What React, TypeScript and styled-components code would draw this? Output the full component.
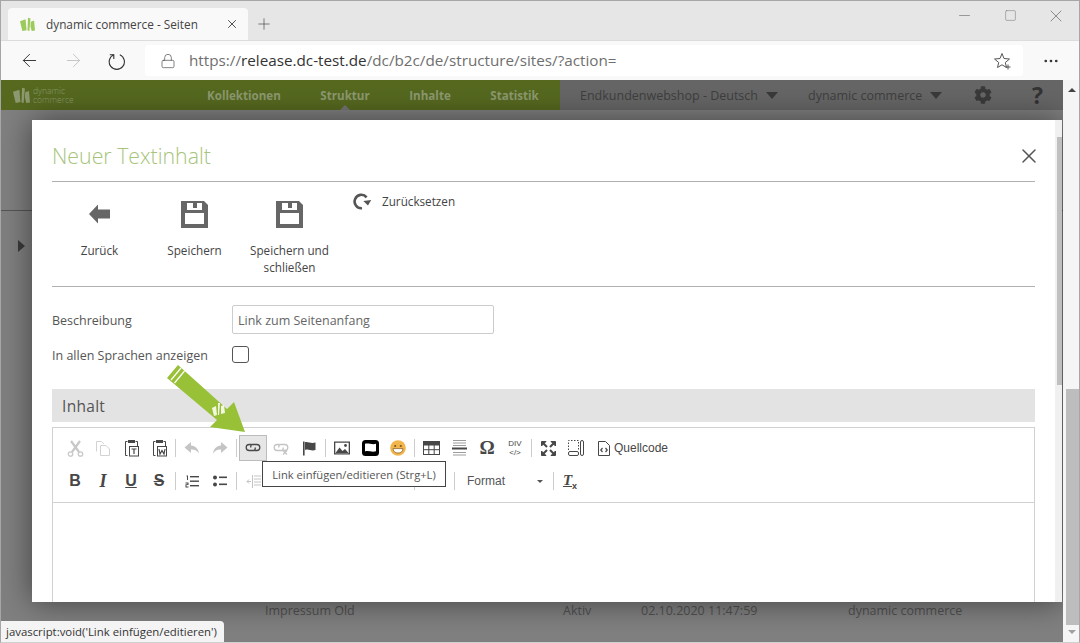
import React from 'react'
import styled, { createGlobalStyle } from 'styled-components'
import { ArrowLeft, ArrowRight, Lock, Minus, MoreHorizontal, Plus, Square, X } from 'lucide-react'
import { FaCog } from 'react-icons/fa'

const GlobalStyle = createGlobalStyle`
    html, body { margin: 0; padding: 0; }
    body { width: 1080px; height: 643px; overflow: hidden; background: #fff; }
    * { box-sizing: border-box; }
`

const Frame = styled.div`
    width: 1080px;
    height: 643px;
    display: flex;
    flex-direction: column;
    border: 1px solid #a6a6a6;
    border-bottom-color: #d0d0d0;
    font-family: 'Open Sans', sans-serif;
    position: relative;
    overflow: hidden;
`

/* browser chrome */
const TabStrip = styled.div`
    height: 40px;
    flex: none;
    background: #e6e6e6;
    display: flex;
    align-items: flex-end;
    padding-left: 7px;
    border-bottom: 1px solid #dcdcdc;
`
const Tab = styled.div`
    width: 240px;
    height: 32px;
    background: #f9f9f9;
    border-radius: 4px 4px 0 0;
    display: flex;
    align-items: center;
    padding: 0 9px 0 12px;
    color: #444;
    font-size: 11.8px;
`
const TabTitle = styled.span`
    flex: 1;
    margin-left: 11px;
    white-space: nowrap;
`
const NewTab = styled.div`
    width: 32px;
    height: 32px;
    display: flex;
    align-items: center;
    justify-content: center;
    color: #555;
`
const WindowControls = styled.div`
    margin-left: auto;
    align-self: flex-start;
    display: flex;
    color: #777;
`
const WindowControl = styled.div`
    width: 46px;
    height: 29px;
    display: flex;
    align-items: center;
    justify-content: center;
`
const ToolBar = styled.div`
    height: 39px;
    flex: none;
    background: #f9f9f9;
    display: flex;
    align-items: center;
    padding-left: 6px;
`
const NavButton = styled.div<{ $off?: boolean }>`
    width: 44px;
    height: 32px;
    display: flex;
    align-items: center;
    justify-content: center;
    color: ${({ $off }) => ($off ? '#c4c4c4' : '#333')};
`
const AddressBar = styled.div`
    width: 878px;
    height: 31px;
    margin-left: 6px;
    background: #fff;
    border-radius: 4px;
    display: flex;
    align-items: center;
    padding: 0 11px 0 15px;
    color: #555;
`
const Url = styled.div`
    flex: 1;
    margin-left: 13px;
    padding-bottom: 2px;
    font-size: 15.25px;
    white-space: nowrap;
    color: #6f6f6f;
    b { font-weight: 400; color: #333; }
`
const MoreButton = styled.div`
    width: 56px;
    display: flex;
    justify-content: center;
    color: #333;
`

/* page behind the dialog */
const Viewport = styled.div`
    flex: 1;
    min-height: 0;
    display: flex;
`
const Main = styled.div`
    flex: 1;
    min-width: 0;
    position: relative;
    overflow: hidden;
    background: #808080;
    display: flex;
    flex-direction: column;
`
const PageHeader = styled.div`
    height: 30px;
    flex: none;
    display: flex;
    background: #56691f;
`
const Logo = styled.div`
    width: 206px;
    display: flex;
    align-items: center;
    padding-left: 12px;
    color: #8d9a70;
`
const LogoText = styled.div`
    margin-left: 3px;
    font-size: 8.5px;
    line-height: 9px;
    font-weight: 300;
`
const Nav = styled.div`
    width: 353px;
    display: flex;
    align-items: center;
    gap: 39.5px;
    font-size: 11.6px;
    font-weight: 700;
    color: #8d9a70;
`
const NavItem = styled.div<{ $active?: boolean }>`
    position: relative;
    white-space: nowrap;
    ${({ $active }) => $active && `
        &::after {
            content: '';
            position: absolute;
            left: 50%;
            bottom: -7px;
            margin-left: -5px;
            border: 5px solid transparent;
            border-top: 0;
            border-bottom-color: #757575;
        }
    `}
`
const HeaderRight = styled.div`
    flex: 1;
    background: #666;
    display: flex;
    align-items: center;
    padding-left: 20px;
    color: #3f3f3f;
    font-size: 12.5px;
`
const Picker = styled.div<{ $width: number }>`
    width: ${({ $width }) => $width}px;
    display: flex;
    align-items: center;
    white-space: nowrap;
`
const Caret = styled.span`
    margin-left: 8px;
    border: 6.5px solid transparent;
    border-bottom: 0;
    border-top: 7px solid #3a3a3a;
`
const HelpMark = styled.div`
    margin-left: 40px;
    font-size: 23px;
    font-weight: 700;
    color: #333;
    line-height: 30px;
`
const PageRule = styled.div`
    margin-top: 100px;
    height: 1px;
    background: #555;
`
const TreeArrow = styled.div`
    margin: 29px 0 0 17px;
    width: 0;
    border: 6px solid transparent;
    border-right: 0;
    border-left: 7px solid #3a3a3a;
`
const TableRow = styled.div`
    margin-top: auto;
    margin-bottom: 23px;
    display: grid;
    grid-template-columns: 298px 78px 207px 1fr;
    padding-left: 264px;
    font-size: 12.5px;
    color: #505050;
    white-space: nowrap;
`

/* dialog */
const Dialog = styled.div`
    position: absolute;
    left: 31px;
    top: 40px;
    width: 1030px;
    height: 482px;
    background: #fff;
    display: flex;
    overflow: hidden;
    box-shadow: 0 0 30px rgba(0, 0, 0, 0.5);
`
const DialogBody = styled.div`
    flex: 1;
    min-width: 0;
    padding: 0 20px;
`
const DialogHead = styled.div`
    height: 62px;
    display: flex;
    align-items: center;
    justify-content: space-between;
    padding-top: 10px;
    border-bottom: 1px solid #b0b0b0;
`
const Title = styled.div`
    font-size: 21.3px;
    font-weight: 300;
    color: #a6c47c;
`
const CloseMark = styled.div`
    color: #555;
    display: flex;
    margin-right: -6px;
`
const Actions = styled.div`
    height: 105px;
    display: flex;
    border-bottom: 1px solid #b0b0b0;
    color: #444;
    font-size: 11.7px;
`
const ActionButton = styled.div`
    width: 95px;
    display: flex;
    flex-direction: column;
    align-items: center;
    text-align: center;
    line-height: 17px;
    padding-top: 18px;
`
const ActionIcon = styled.div`
    height: 28px;
    margin-bottom: 14px;
    display: flex;
    align-items: center;
`
const ResetButton = styled.div`
    display: flex;
    align-items: center;
    gap: 10px;
    height: 20px;
    margin: 9px 0 0 16px;
`
const FormRow = styled.div<{ $top: number }>`
    display: flex;
    align-items: center;
    margin-top: ${({ $top }) => $top}px;
    font-size: 12.5px;
    color: #555;
`
const FormLabel = styled.div`
    width: 180px;
    height: 17px;
    line-height: 20px;
    white-space: nowrap;
`
const TextField = styled.div`
    width: 262px;
    height: 29px;
    border: 1px solid #ccc;
    border-radius: 2px;
    padding: 2px 0 0 5px;
    display: flex;
    align-items: center;
    color: #666;
    font-size: 12.5px;
`
const CheckBox = styled.div`
    width: 17px;
    height: 17px;
    border: 1px solid #555;
    border-radius: 3px;
`
const SectionBar = styled.div`
    margin-top: 26px;
    height: 33px;
    background: #e3e3e3;
    display: flex;
    align-items: center;
    padding-left: 10px;
    font-size: 15.5px;
    color: #555;
    letter-spacing: 0.3px;
`
const Editor = styled.div`
    margin-top: 5px;
    height: 200px;
    border: 1px solid #d1d1d1;
`
const EditorTools = styled.div`
    height: 75px;
    padding: 7px 0 0 8px;
    border-bottom: 1px solid #d1d1d1;
    display: flex;
    flex-direction: column;
    gap: 7px;
`
const ToolRow = styled.div`
    display: flex;
    align-items: center;
    height: 26px;
`
const ToolButton = styled.div<{ $active?: boolean; $wide?: boolean }>`
    width: ${({ $wide }) => ($wide ? 'auto' : '28px')};
    margin-left: ${({ $wide }) => ($wide ? '8px' : '0')};
    height: 26px;
    flex: none;
    display: flex;
    align-items: center;
    justify-content: center;
    gap: 4px;
    color: #474747;
    background: ${({ $active }) => ($active ? '#e6e6e6' : 'transparent')};
    box-shadow: ${({ $active }) => ($active ? 'inset 0 0 0 1px #bcbcbc' : 'none')};
`
const Separator = styled.span<{ $before?: number }>`
    width: 5px;
    height: 18px;
    flex: none;
    margin-left: ${({ $before }) => $before ?? 0}px;
    background: linear-gradient(#ccc, #ccc) center / 1px 100% no-repeat;
`
const ToolText = styled.span`
    font-family: 'Liberation Sans', sans-serif;
    font-size: 12px;
    color: #474747;
`
const StyleLetter = styled.span<{ $underline?: boolean; $strike?: boolean; $italic?: boolean }>`
    font-family: ${({ $italic }) => ($italic ? "'Liberation Serif', serif" : "'Liberation Sans', sans-serif")};
    font-size: ${({ $italic }) => ($italic ? '18px' : '16px')};
    font-weight: 700;
    font-style: ${({ $italic }) => ($italic ? 'italic' : 'normal')};
    text-decoration: ${({ $underline, $strike }) => ($underline ? 'underline' : $strike ? 'line-through' : 'none')};
    color: #474747;
`
const Omega = styled.span`
    font-family: 'Liberation Serif', serif;
    font-size: 19px;
    font-weight: 700;
    color: #474747;
`
const DivMark = styled.span`
    display: flex;
    flex-direction: column;
    align-items: center;
    gap: 1px;
    font-family: 'Liberation Sans', sans-serif;
    font-size: 8px;
    line-height: 8px;
    color: #474747;
`
const FormatCombo = styled.div`
    width: 94px;
    height: 26px;
    flex: none;
    display: flex;
    align-items: center;
    justify-content: space-between;
    padding: 0 8px 0 10px;
    font-family: 'Liberation Sans', sans-serif;
    font-size: 12px;
    color: #555;
`
const ComboArrow = styled.span`
    border: 3px solid transparent;
    border-bottom: 0;
    border-top: 3px solid #555;
`
const ClearFormat = styled.span`
    font-family: 'Liberation Serif', serif;
    font-size: 15px;
    font-weight: 700;
    font-style: italic;
    text-decoration: underline;
    color: #474747;
    sub { font-family: 'Liberation Sans', sans-serif; font-size: 9px; font-style: normal; }
`
const DialogScroll = styled.div`
    width: 7px;
    flex: none;
    background: #f0f0f0;
    padding: 17px 0 0 2px;
    position: relative;
    &::before {
        content: '';
        display: block;
        height: 248px;
        background: #c0c0c0;
    }
`

const Tooltip = styled.div`
    position: absolute;
    left: 261px;
    top: 381px;
    width: 184px;
    height: 26px;
    background: #fff;
    border: 1px solid #444;
    display: flex;
    align-items: center;
    justify-content: center;
    font-size: 11.2px;
    color: #555;
    white-space: nowrap;
`
const Pointer = styled.svg`
    position: absolute;
    left: 160px;
    top: 284px;
`
const StatusBubble = styled.div`
    position: absolute;
    left: 0;
    bottom: 0;
    width: 223px;
    height: 21px;
    background: #f4f4f4;
    border-radius: 0 4px 0 0;
    padding-left: 5px;
    display: flex;
    align-items: center;
    font-size: 11.4px;
    color: #333;
    white-space: nowrap;
`

/* page scrollbar */
const PageScroll = styled.div`
    width: 16px;
    flex: none;
    background: #f5f5f5;
    display: flex;
    flex-direction: column;
    align-items: center;
    padding: 8px 0 0 2px;
    position: relative;
`
const ScrollUp = styled.span`
    border: 4px solid transparent;
    border-top: 0;
    border-bottom: 4px solid #444;
`
const ScrollThumb = styled.div`
    width: 13px;
    height: 236px;
    margin-top: 297px;
    background: #bdbdbd;
`
const ScrollDown = styled.span`
    margin-top: 5px;
    border: 4px solid transparent;
    border-bottom: 0;
    border-top: 4px solid #a0a0a0;
`

function BrandMark({ size, tone }: { size: number; tone: string }) {
    return (
        <svg width={size} height={size} viewBox="0 0 16 16" fill={tone}>
            <path d="M0 4.5 6 2.5 7 14 2.5 15Z" />
            <path d="M8.5 0.8 11.2 1.5 10 15 8 14.5Z" />
            <path d="M11.5 5 15 3.8 16 14.5 12.5 15 11.2 10Z" />
        </svg>
    )
}

function ReloadIcon() {
    return (
        <svg width="18" height="18" viewBox="0 0 18 18" fill="none" stroke="#333" strokeWidth="1.1">
            <path d="M11.8 2.8A7.6 7.6 0 1 1 5.8 2.8" />
            <path d="M1.8 2.8H5.8V7" />
        </svg>
    )
}

function ResetIcon() {
    return (
        <svg width="19" height="17" viewBox="0 0 19 17" fill="none">
            <path d="M9 15.2A6.7 6.7 0 1 1 13.6 4.4" stroke="#555" strokeWidth="2.6" />
            <path d="M10.5 7.5H18.5L14.5 12.5Z" fill="#555" transform="rotate(-8 14 9)" />
        </svg>
    )
}

function SaveIcon() {
    return (
        <svg width="27" height="27" viewBox="0 0 27 27">
            <path
                fill="#666"
                fillRule="evenodd"
                d="M0 0H23L27 4V27H0ZM6 2V9H21V2H16V7H12V2ZM4 12V23H23V12Z"
            />
        </svg>
    )
}

function Cut() {
    return (
        <svg width="17" height="17" viewBox="0 0 17 17" fill="none" stroke="#c8c8c8">
            <path d="M4 1 12 12M13 1 5 12" strokeWidth="2.2" />
            <circle cx="3.5" cy="14" r="2.2" strokeWidth="1.3" />
            <circle cx="13.5" cy="14" r="2.2" strokeWidth="1.3" />
        </svg>
    )
}

function Copy() {
    return (
        <svg width="16" height="17" viewBox="0 0 16 17" fill="none" stroke="#d2d2d2">
            <path d="M1.5 11.5V1.5H6.5L9 4" />
            <path d="M5.5 15.5V5.5H11L14.5 9V15.5Z" fill="#fff" />
        </svg>
    )
}

function PasteIcon({ word }: { word?: boolean }) {
    return (
        <svg width="15" height="18" viewBox="0 0 15 18" fill="none" stroke="#474747">
            <path d="M3.5 2.5H1.5V16.5H3.5M11.5 2.5H13.5V8" />
            <rect x="4" y="1" width="7" height="3" fill="#474747" stroke="none" />
            <rect x="5.5" y="7.5" width="9" height="9.5" fill="#fff" />
            <path d={word ? 'M7 10 8 15 10 11.5 12 15 13 10' : 'M7.5 10H12.5M10 10V15'} strokeWidth="1.2" />
        </svg>
    )
}

function Curve({ flip }: { flip?: boolean }) {
    return (
        <svg width="16" height="14" viewBox="0 0 16 14" fill="#c4c4c4" transform={flip ? 'scale(-1 1)' : undefined}>
            <path d="M7 1 0.5 6.5 7 12V8.5C10.5 8.2 13 9.5 15 12.5 14.5 8 11.5 4.8 7 4.5Z" />
        </svg>
    )
}

function LinkIcon({ off }: { off?: boolean }) {
    const tone = off ? '#c4c4c4' : '#474747'
    return (
        <svg width="16" height="14" viewBox="0 0 16 14" fill="none" stroke={tone} strokeWidth="1.3">
            <path d="M6.5 3.5H4.2A3 3 0 0 0 4.2 9.5H9A2.4 2.4 0 0 0 10 6.5" />
            <path d="M9.5 9.5H11.8A3 3 0 0 0 11.8 3.5H7A2.4 2.4 0 0 0 6 6.5" />
            {off && <path d="M10 9.5 14 13.5M14 9.5 10 13.5" />}
        </svg>
    )
}

function FlagIcon() {
    return (
        <svg width="15" height="15" viewBox="0 0 15 15" fill="#474747">
            <rect x="1" y="0.5" width="1.6" height="14" />
            <path d="M3 1.2C6 0 8.5 3 13.5 1.5V9C9 10.5 6.5 7.5 3 9Z" />
        </svg>
    )
}

function ImageIcon() {
    return (
        <svg width="16" height="14" viewBox="0 0 16 14" fill="#474747">
            <path fillRule="evenodd" d="M0 0.5H16V13.5H0ZM1.3 1.8V12.2H14.7V1.8Z" />
            <path d="M1.5 12 5.5 6.5 8.5 10 11 8 14.5 12Z" />
            <circle cx="11.5" cy="4.5" r="1.4" />
        </svg>
    )
}

function MediaIcon() {
    return (
        <svg width="17" height="16" viewBox="0 0 17 16">
            <rect width="17" height="16" rx="3.5" fill="#000" />
            <path d="M3 3.8C6 2.6 10 5 14 3.8V11.2C10 12.6 6 10.2 3 11.5Z" fill="#fff" />
        </svg>
    )
}

function SmileyIcon() {
    return (
        <svg width="16" height="16" viewBox="0 0 16 16">
            <circle cx="8" cy="8" r="7.8" fill="#f2b54b" />
            <circle cx="5.2" cy="6" r="1.1" fill="#7a5620" />
            <circle cx="10.8" cy="6" r="1.1" fill="#7a5620" />
            <path d="M3 8.6H13C12.6 12 10.5 13 8 13S3.4 12 3 8.6Z" fill="#fff" stroke="#7a5620" strokeWidth="0.7" />
        </svg>
    )
}

function TableIcon() {
    return (
        <svg width="17" height="14" viewBox="0 0 17 14" fill="none" stroke="#474747">
            <rect x="0.5" y="0.5" width="16" height="13" />
            <rect x="0.5" y="0.5" width="16" height="3.5" fill="#474747" />
            <path d="M0.5 8.7H16.5M5.8 4V13.5M11.2 4V13.5" />
        </svg>
    )
}

function RuleIcon() {
    return (
        <svg width="15" height="16" viewBox="0 0 15 16" stroke="#9c9c9c">
            <path d="M1 0.5H14M1 3H14M1 5.5H14M1 12.5H14M1 15H14" />
            <path d="M0 8.5H15" stroke="#474747" strokeWidth="2" />
        </svg>
    )
}

function MaximizeIcon() {
    return (
        <svg width="15" height="15" viewBox="0 0 15 15" fill="#474747" stroke="#474747">
            <path d="M0.5 5V0.5H5ZM10 0.5H14.5V5ZM0.5 10V14.5H5ZM14.5 10V14.5H10Z" />
            <path d="M2 2 6 6M13 2 9 6M2 13 6 9M13 13 9 9" strokeWidth="2" />
        </svg>
    )
}

function BlocksIcon() {
    return (
        <svg width="16" height="16" viewBox="0 0 16 16" fill="none" stroke="#474747">
            <path d="M0.5 10V0.5H10.5V10" strokeDasharray="1.5 1.5" />
            <rect x="0.5" y="11.5" width="10" height="4" rx="1.5" />
            <rect x="12.5" y="0.5" width="3" height="15" rx="1.5" />
        </svg>
    )
}

function SourceIcon() {
    return (
        <svg width="12" height="15" viewBox="0 0 12 15" fill="none" stroke="#474747">
            <path d="M0.5 0.5H7.5L11.5 4.5V14.5H0.5Z" />
            <path d="M4.5 7 2.8 9 4.5 11M7.5 7 9.2 9 7.5 11" strokeWidth="1.2" />
        </svg>
    )
}

function NumberedList() {
    return (
        <svg width="14" height="13" viewBox="0 0 14 13" fill="#474747">
            <rect x="5" y="1" width="9" height="1.4" />
            <rect x="5" y="5.5" width="9" height="1.4" />
            <rect x="5" y="10" width="9" height="1.4" />
            <path d="M1.5 0.5H3V5H2V1.5H1.5ZM0.5 7.5H3.5V10H1.5V11.5H3.5V12.5H0.5V9.2H2.5V8.5H0.5Z" />
        </svg>
    )
}

function BulletList() {
    return (
        <svg width="14" height="12" viewBox="0 0 14 12" fill="#474747">
            <circle cx="2" cy="2.5" r="2" />
            <circle cx="2" cy="9.5" r="2" />
            <rect x="6" y="1.5" width="8" height="1.6" />
            <rect x="6" y="8.5" width="8" height="1.6" />
        </svg>
    )
}

function OutdentIcon() {
    return (
        <svg width="15" height="13" viewBox="0 0 15 13" stroke="#c4c4c4" fill="none">
            <path d="M6.5 0V13M8 1H15M8 4H15M8 7H15M8 10H15M1 6.5H5M3 4.5 1 6.5 3 8.5" />
        </svg>
    )
}

const FIRST_ROW_PASTE = [<Cut key="cut" />, <Copy key="copy" />, <PasteIcon key="text" />, <PasteIcon key="word" word />]

export default function App() {
    return (
        <>
            <GlobalStyle />
            <Frame>
                <TabStrip>
                    <Tab>
                        <BrandMark size={15} tone="#9ccb5c" />
                        <TabTitle>dynamic commerce - Seiten</TabTitle>
                        <X size={14} strokeWidth={1.6} color="#444" />
                    </Tab>
                    <NewTab>
                        <Plus size={18} strokeWidth={1} />
                    </NewTab>
                    <WindowControls>
                        <WindowControl><Minus size={17} strokeWidth={1} /></WindowControl>
                        <WindowControl><Square size={13} strokeWidth={1} /></WindowControl>
                        <WindowControl><X size={20} strokeWidth={1} /></WindowControl>
                    </WindowControls>
                </TabStrip>
                <ToolBar>
                    <NavButton><ArrowLeft size={21} strokeWidth={1.1} /></NavButton>
                    <NavButton $off><ArrowRight size={21} strokeWidth={1.1} /></NavButton>
                    <NavButton><ReloadIcon /></NavButton>
                    <AddressBar>
                        <Lock size={16} strokeWidth={1.1} />
                        <Url>
                            https://<b>release.dc-test.de</b>/dc/b2c/de/structure/sites/?action=
                        </Url>
                        <svg width="18" height="18" viewBox="0 0 18 18" fill="none" stroke="#555">
                            <path d="M8 1.5 10 6.5 15.5 7 11.3 10.5 12.5 15.5 8 12.8 3.5 15.5 4.7 10.5 0.5 7 6 6.5Z" />
                            <path d="M14 12.5V17.5M11.5 15H16.5" />
                        </svg>
                    </AddressBar>
                    <MoreButton><MoreHorizontal size={18} strokeWidth={1.6} /></MoreButton>
                </ToolBar>
                <Viewport>
                    <Main>
                        <PageHeader>
                            <Logo>
                                <BrandMark size={17} tone="#8d9a70" />
                                <LogoText>dynamic<br />commerce</LogoText>
                            </Logo>
                            <Nav>
                                <NavItem>Kollektionen</NavItem>
                                <NavItem $active>Struktur</NavItem>
                                <NavItem>Inhalte</NavItem>
                                <NavItem>Statistik</NavItem>
                            </Nav>
                            <HeaderRight>
                                <Picker $width={228}>Endkundenwebshop - Deutsch<Caret /></Picker>
                                <Picker $width={166}>dynamic commerce<Caret /></Picker>
                                <FaCog size={18} color="#3a3a3a" />
                                <HelpMark>?</HelpMark>
                            </HeaderRight>
                        </PageHeader>
                        <PageRule />
                        <TreeArrow />
                        <TableRow>
                            <span>Impressum Old</span>
                            <span>Aktiv</span>
                            <span>02.10.2020 11:47:59</span>
                            <span>dynamic commerce</span>
                        </TableRow>

                        <Dialog>
                            <DialogBody>
                                <DialogHead>
                                    <Title>Neuer Textinhalt</Title>
                                    <CloseMark><X size={24} strokeWidth={1.5} /></CloseMark>
                                </DialogHead>
                                <Actions>
                                    <ActionButton>
                                        <ActionIcon>
                                            <svg width="21" height="20" viewBox="0 0 21 20" fill="#666">
                                                <path d="M0 10 9 0.5V5.5H21V14.5H9V19.5Z" />
                                            </svg>
                                        </ActionIcon>
                                        Zurück
                                    </ActionButton>
                                    <ActionButton>
                                        <ActionIcon><SaveIcon /></ActionIcon>
                                        Speichern
                                    </ActionButton>
                                    <ActionButton>
                                        <ActionIcon><SaveIcon /></ActionIcon>
                                        Speichern und schließen
                                    </ActionButton>
                                    <ResetButton>
                                        <ResetIcon />
                                        Zurücksetzen
                                    </ResetButton>
                                </Actions>
                                <FormRow $top={18}>
                                    <FormLabel>Beschreibung</FormLabel>
                                    <TextField>Link zum Seitenanfang</TextField>
                                </FormRow>
                                <FormRow $top={12}>
                                    <FormLabel>In allen Sprachen anzeigen</FormLabel>
                                    <CheckBox />
                                </FormRow>
                                <SectionBar>Inhalt</SectionBar>
                                <Editor>
                                    <EditorTools>
                                        <ToolRow>
                                            {FIRST_ROW_PASTE.map((icon) => (
                                                <ToolButton key={icon.key}>{icon}</ToolButton>
                                            ))}
                                            <Separator />
                                            <ToolButton><Curve /></ToolButton>
                                            <ToolButton><Curve flip /></ToolButton>
                                            <Separator />
                                            <ToolButton $active><LinkIcon /></ToolButton>
                                            <ToolButton><LinkIcon off /></ToolButton>
                                            <ToolButton><FlagIcon /></ToolButton>
                                            <Separator />
                                            <ToolButton><ImageIcon /></ToolButton>
                                            <ToolButton><MediaIcon /></ToolButton>
                                            <ToolButton><SmileyIcon /></ToolButton>
                                            <Separator />
                                            <ToolButton><TableIcon /></ToolButton>
                                            <ToolButton><RuleIcon /></ToolButton>
                                            <ToolButton><Omega>Ω</Omega></ToolButton>
                                            <ToolButton><DivMark><span>DIV</span><span>&lt;/&gt;</span></DivMark></ToolButton>
                                            <Separator />
                                            <ToolButton><MaximizeIcon /></ToolButton>
                                            <ToolButton><BlocksIcon /></ToolButton>
                                            <ToolButton $wide>
                                                <SourceIcon />
                                                <ToolText>Quellcode</ToolText>
                                            </ToolButton>
                                        </ToolRow>
                                        <ToolRow>
                                            <ToolButton><StyleLetter>B</StyleLetter></ToolButton>
                                            <ToolButton><StyleLetter $italic>I</StyleLetter></ToolButton>
                                            <ToolButton><StyleLetter $underline>U</StyleLetter></ToolButton>
                                            <ToolButton><StyleLetter $strike>S</StyleLetter></ToolButton>
                                            <Separator />
                                            <ToolButton><NumberedList /></ToolButton>
                                            <ToolButton><BulletList /></ToolButton>
                                            <Separator />
                                            <ToolButton><OutdentIcon /></ToolButton>
                                            <Separator $before={145} />
                                            <Separator $before={35} />
                                            <FormatCombo>Format<ComboArrow /></FormatCombo>
                                            <Separator />
                                            <ToolButton>
                                                <ClearFormat>T<sub>x</sub></ClearFormat>
                                            </ToolButton>
                                        </ToolRow>
                                    </EditorTools>
                                </Editor>
                            </DialogBody>
                            <DialogScroll />
                        </Dialog>

                        <Pointer width="90" height="70" viewBox="160 364 90 70">
                            <path d="M177 365 226 409 233 402 244 432 209 427 216 420 166 378Z" fill="#98c138" />
                            <path d="M180 368 170 380M183.5 371 173.5 383" stroke="#fff" strokeWidth="1.2" />
                            <path d="M211 408 215 406 216 415 213 416ZM217 403 219 403 218 415 217 415ZM220 406 223 405 224 413 220 414Z" fill="#f2f7e2" />
                        </Pointer>
                        <Tooltip>Link einfügen/editieren (Strg+L)</Tooltip>
                        <StatusBubble>javascript:void('Link einfügen/editieren')</StatusBubble>
                    </Main>
                    <PageScroll>
                        <ScrollUp />
                        <ScrollThumb />
                        <ScrollDown />
                    </PageScroll>
                </Viewport>
            </Frame>
        </>
    )
}
